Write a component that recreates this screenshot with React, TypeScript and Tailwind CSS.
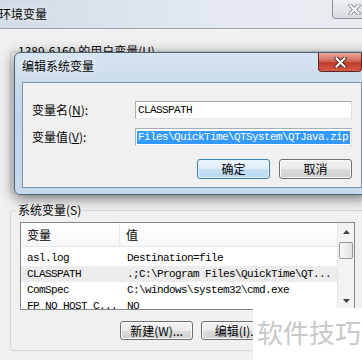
import type { ReactNode } from 'react';

const mono = "font-['Liberation_Mono',monospace] text-[11px] tracking-[-0.6px]";

const rows = [
  { name: 'asl.log', value: 'Destination=file', selected: false },
  { name: 'CLASSPATH', value: '.;C:\\Program Files\\QuickTime\\QT...', selected: true },
  { name: 'ComSpec', value: 'C:\\windows\\system32\\cmd.exe', selected: false },
  { name: 'FP_NO_HOST_C...', value: 'NO', selected: false },
];

function CloseGlyph({ outline, fill }: { outline: string; fill: string }) {
  return (
    <svg width="13" height="11" viewBox="0 0 13 11">
      <path d="M2.5 1.5 L10.5 9.5 M10.5 1.5 L2.5 9.5" stroke={outline} strokeWidth="4" strokeLinecap="square" fill="none" />
      <path d="M2.5 1.5 L10.5 9.5 M10.5 1.5 L2.5 9.5" stroke={fill} strokeWidth="2.2" strokeLinecap="square" fill="none" />
    </svg>
  );
}

function WinButton({ children, primary }: { children: ReactNode; primary?: boolean }) {
  return (
    <div
      className={
        primary
          ? 'w-[73px] h-[20px] rounded-[3px] border border-[#3c7fb1] bg-[linear-gradient(#eef6fc_0%,#dcecf8_50%,#c8e1f3_51%,#b9d9f0_100%)] shadow-[inset_0_0_0_1px_#e8f4fc] flex items-center justify-center leading-[16px]'
          : 'w-[73px] h-[20px] rounded-[3px] border border-[#707070] bg-[linear-gradient(#f2f2f2_0%,#ebebeb_50%,#dddddd_51%,#cfcfcf_100%)] shadow-[inset_0_0_0_1px_#fcfcfc] flex items-center justify-center leading-[16px]'
      }
    >
      {children}
    </div>
  );
}

function SmallButton({ children }: { children: ReactNode }) {
  return (
    <div className="w-[73px] h-[19px] rounded-[3px] border border-[#707070] bg-[linear-gradient(#f2f2f2_0%,#ebebeb_50%,#dddddd_51%,#cfcfcf_100%)] shadow-[inset_0_0_0_1px_#fcfcfc] flex items-center justify-center leading-[15px]">
      {children}
    </div>
  );
}

function ScrollBar() {
  return (
    <div className="w-[17px] shrink-0 flex flex-col bg-[#f3f3f3] border-l border-[#e6e6e6]">
      <div className="h-[17px] flex items-center justify-center">
        <svg width="7" height="4" viewBox="0 0 7 4"><path d="M3.5 0 L7 4 L0 4 Z" fill="#404040" /></svg>
      </div>
      <div className="mt-[2px] mx-[1px] h-[17px] rounded-[2px] border border-[#989898] bg-[linear-gradient(90deg,#f6f6f6,#e2e2e2)]" />
      <div className="flex-1" />
      <div className="h-[17px] flex items-center justify-center">
        <svg width="7" height="4" viewBox="0 0 7 4"><path d="M0 0 L7 0 L3.5 4 Z" fill="#404040" /></svg>
      </div>
    </div>
  );
}

export default function App() {
  return (
    <div className="relative w-[362px] h-[360px] overflow-hidden bg-[#f0f0f0] font-['Noto_Sans_CJK_SC','Noto_Sans',sans-serif] text-[12px] text-black">
      {/* background window: 环境变量 */}
      <div className="h-[29px] flex items-center bg-[linear-gradient(90deg,#d2dbe6,#e2e8ef_55%,#e9edf2)] border-b border-[#9ca7b4]">
        <span className="-ml-[1px] leading-[16px] [text-shadow:0_0_6px_#fff]">环境变量</span>
      </div>
      <div className="absolute top-0 left-[332px] w-[44px] h-[19px] rounded-b-[4px] border border-t-0 border-[#8a9098] bg-[linear-gradient(#eef1f4,#d6dce3)] flex items-center justify-center">
        <CloseGlyph outline="#8a8f96" fill="#f7f7f7" />
      </div>

      <div className="pt-[14px] pl-[10px]">
        <fieldset className="w-[354px] h-[151px] border border-[#cfd6dc] rounded-[3px] pl-[5px]">
          <legend className="px-[2px] leading-[16px]">1389-6160 的用户变量(U)</legend>
        </fieldset>

        <fieldset className="mt-[8px] w-[354px] h-[149px] border border-[#cfd6dc] rounded-[3px] pl-[5px] pt-[4px]">
          <legend className="px-[2px] leading-[16px]">系统变量(S)</legend>

          <div className="ml-[4px] w-[335px] h-[88px] border border-[#828790] bg-white flex overflow-hidden">
            <div className="flex-1 min-w-0">
              <div className="h-[24px] flex border-b border-[#e5e5e5] bg-[linear-gradient(#ffffff,#f6f7f9)] leading-[16px]">
                <div className="w-[99px] pl-[6px] flex items-center border-r border-[#e3e8ee]">变量</div>
                <div className="pl-[6px] flex items-center">值</div>
              </div>
              <div className="pt-[3px]">
                {rows.map((r) => (
                  <div key={r.name} className={`h-[16px] flex items-center ${r.selected ? 'bg-[#ececec]' : ''}`}>
                    <div className={`w-[99px] pl-[6px] whitespace-nowrap overflow-hidden ${mono}`}>{r.name}</div>
                    <div className={`pl-[7px] whitespace-nowrap ${mono}`}>{r.value}</div>
                  </div>
                ))}
              </div>
            </div>
            <ScrollBar />
          </div>

          <div className="ml-[4px] w-[335px] mt-[11px] flex justify-end gap-[8px]">
            <SmallButton>新建(W)...</SmallButton>
            <SmallButton>编辑(I)...</SmallButton>
            <SmallButton>删除(L)</SmallButton>
          </div>
        </fieldset>
      </div>

      {/* dialog: 编辑系统变量 */}
      <div className="absolute left-[14px] top-[52px] w-[356px] h-[143px] rounded-[6px] border border-[#4f6176] bg-[linear-gradient(#d7e4f1,#bfd3e9_45%,#c8d9eb)] shadow-[0_3px_14px_rgba(0,0,0,0.55)] flex flex-col">
        <div className="h-[29px] pl-[7px] pt-[5px] leading-[16px] [text-shadow:0_0_8px_#fff]">编辑系统变量</div>
        <div className="absolute top-0 left-[303px] w-[44px] h-[19px] rounded-b-[4px] border border-t-0 border-[#5a2a24] bg-[linear-gradient(#e9a99c,#d0675a_45%,#c0392b_55%,#d65a48)] flex items-center justify-center">
          <CloseGlyph outline="#4a1c16" fill="#ffffff" />
        </div>

        <div className="mx-[7px] mb-[6px] flex-1 border border-[#7f93a9] bg-[#f0f0f0] pt-[18px] pr-[9px]">
          <div className="flex items-center">
            <div className="w-[112px] pl-[9px] leading-[16px]">
              变量名(<span className="underline">N</span>):
            </div>
            <div className="w-[217px] h-[18px] border border-[#abadb3] border-r-[#dbdfe6] border-b-[#e3e9ef] bg-white pl-[2px] flex items-center">
              <span className={mono}>CLASSPATH</span>
            </div>
          </div>
          <div className="mt-[9px] flex items-center">
            <div className="w-[112px] pl-[9px] leading-[16px]">
              变量值(<span className="underline">V</span>):
            </div>
            <div className="w-[217px] h-[18px] border border-[#abadb3] border-r-[#dbdfe6] border-b-[#e3e9ef] bg-white pl-[1px] flex items-center overflow-hidden">
              <span className={`bg-[#3399ff] text-white leading-[13px] pl-[1px] pr-[2px] whitespace-nowrap ${mono}`}>
                Files\QuickTime\QTSystem\QTJava.zip
              </span>
            </div>
          </div>
          <div className="mt-[13px] flex justify-end gap-[9px]">
            <WinButton primary>确定</WinButton>
            <WinButton>取消</WinButton>
          </div>
        </div>
      </div>

      {/* watermark */}
      <div className="absolute left-[253px] top-[308px] right-0 bottom-0 bg-white pl-[4px] pt-[9px]">
        <span className="text-[26px] leading-[30px] text-[#c8c8c8] whitespace-nowrap">软件技巧</span>
      </div>
    </div>
  );
}
